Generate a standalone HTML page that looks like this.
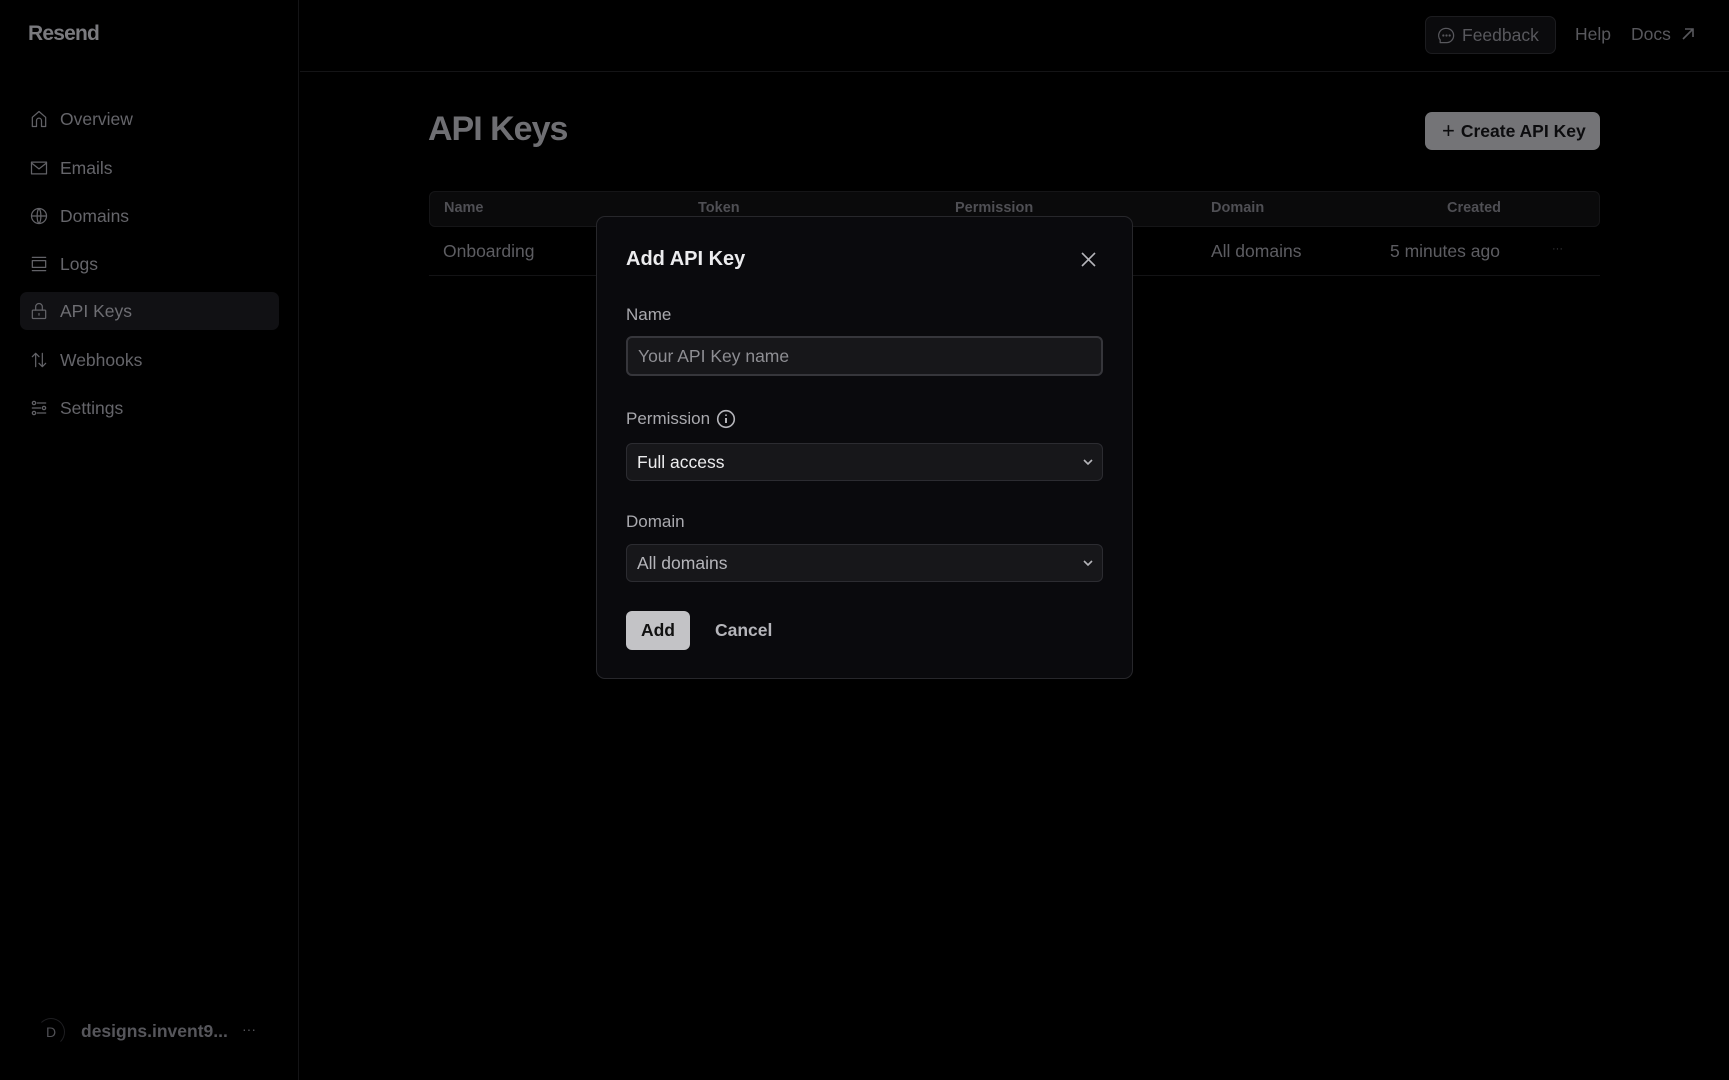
<!DOCTYPE html>
<html><head><meta charset="utf-8">
<style>
*{box-sizing:border-box;margin:0;padding:0}
body{width:1729px;height:1080px;background:#000;font-family:"Liberation Sans",sans-serif;position:relative;overflow:hidden;color:#6a6a6e}
.a{position:absolute;white-space:nowrap}
.side{position:absolute;left:0;top:0;width:299px;height:1080px;border-right:1px solid #141416}
.nav{position:absolute;left:20px;width:259px;height:38px;display:flex;align-items:center;padding-left:9px;font-size:17.5px;color:#65656a;border-radius:7px}
.nav svg{width:20px;height:20px;margin-right:11px;fill:none;stroke:#626267;stroke-width:1.5;stroke-linecap:round;stroke-linejoin:round}
.nav.act{background:#111114;color:#6e6e73}
.th{font-size:14.5px;color:#4f4f54;font-weight:bold}
.lbl{font-size:17px;color:#a9a9ae}
.field{position:absolute;left:626px;width:477px;border:1px solid #2c2c31;border-radius:6px;background:#17171a;display:flex;align-items:center;padding-left:10px;font-size:17.5px}
</style></head><body>
<div class="side">
  <div class="a" style="left:28px;top:22px;font-size:21px;font-weight:bold;color:#7a7a7e;letter-spacing:-0.8px">Resend</div>
  <div class="nav" style="top:100px"><svg viewBox="0 0 24 24"><path d="M4 21V10l8-7 8 7v11h-5v-7a3 3 0 0 0-6 0v7z"/></svg>Overview</div>
  <div class="nav" style="top:149px"><svg viewBox="0 0 24 24"><rect x="3" y="5" width="18" height="14"/><path d="M3 6l9 7 9-7"/></svg>Emails</div>
  <div class="nav" style="top:197px"><svg viewBox="0 0 24 24"><circle cx="12" cy="12" r="9"/><path d="M3 12h18M12 3c-3 3-3 15 0 18M12 3c3 3 3 15 0 18"/></svg>Domains</div>
  <div class="nav" style="top:245px"><svg viewBox="0 0 24 24"><path d="M4 4h16M4 20h16"/><rect x="4" y="8" width="16" height="8"/></svg>Logs</div>
  <div class="nav act" style="top:292px"><svg viewBox="0 0 24 24"><rect x="4" y="11" width="16" height="10" rx="1"/><path d="M8 11V7a4 4 0 0 1 8 0v4M12 15v2"/></svg>API Keys</div>
  <div class="nav" style="top:341px"><svg viewBox="0 0 24 24"><path d="M8 20V4M4 8l4-4 4 4M16 4v16M12 16l4 4 4-4"/></svg>Webhooks</div>
  <div class="nav" style="top:389px"><svg viewBox="0 0 24 24"><path d="M10 6h10M4 12h10M10 18h10"/><circle cx="6" cy="6" r="2"/><circle cx="18" cy="12" r="2"/><circle cx="6" cy="18" r="2"/></svg>Settings</div>
  <div class="a" style="left:37px;top:1018px;width:28px;height:28px;border-radius:50%;border:1px solid #1e1e21;border-left-color:transparent;border-bottom-color:transparent;font-size:14px;color:#505055;text-align:center;line-height:26px">D</div>
  <div class="a" style="left:81px;top:1021px;font-size:17.5px;font-weight:bold;color:#56565b">designs.invent9...</div>
  <div class="a" style="left:242px;top:1021px;font-size:14px;color:#56565b">···</div>
</div>
<div class="a" style="left:300px;top:71px;width:1429px;height:1px;background:#141416"></div>
<div class="a" style="left:1425px;top:16px;width:131px;height:38px;border:1px solid #1c1c1f;border-radius:7px;background:#0b0b0d;display:flex;align-items:center;padding-left:11px;font-size:17.5px;color:#58585d">
  <svg width="19" height="19" viewBox="0 0 24 24" fill="none" stroke="#58585d" stroke-width="1.6" style="margin-right:6px"><path d="M12 3a9 9 0 0 1 0 18H4v-3.5A9 9 0 0 1 12 3z" stroke-linejoin="round"/><circle cx="8" cy="12" r=".6" fill="#58585d"/><circle cx="12" cy="12" r=".6" fill="#58585d"/><circle cx="16" cy="12" r=".6" fill="#58585d"/></svg>Feedback</div>
<div class="a" style="left:1575px;top:24px;font-size:17.5px;color:#58585d">Help</div>
<div class="a" style="left:1631px;top:24px;font-size:17.5px;color:#58585d">Docs</div>
<svg class="a" style="left:1680px;top:26px" width="16" height="16" viewBox="0 0 16 16" fill="none" stroke="#58585d" stroke-width="1.6"><path d="M3 13L13 3M5 3h8v8"/></svg>

<div class="a" style="left:428px;top:110px;font-size:34px;font-weight:bold;color:#6f6f73;letter-spacing:-1px">API Keys</div>
<div class="a" style="left:1425px;top:112px;width:175px;height:38px;border-radius:7px;background:#747477;display:flex;align-items:center;padding-left:17px;font-size:17.5px;font-weight:bold;color:#0c0c0e">
  <span style="font-weight:normal;font-size:22px;margin-right:6px;line-height:1">+</span>Create API Key</div>

<div class="a" style="left:429px;top:191px;width:1171px;height:36px;border:1px solid #151517;border-radius:6px;background:#0a0a0b"></div>
<div class="a th" style="left:444px;top:200px">Name</div>
<div class="a th" style="left:698px;top:200px">Token</div>
<div class="a th" style="left:955px;top:200px">Permission</div>
<div class="a th" style="left:1211px;top:200px">Domain</div>
<div class="a th" style="left:1447px;top:200px">Created</div>
<div class="a" style="left:443px;top:241px;font-size:17.5px;color:#5d5d62">Onboarding</div>
<div class="a" style="left:1211px;top:241px;font-size:17.5px;color:#5d5d62">All domains</div>
<div class="a" style="left:1390px;top:241px;font-size:17.5px;color:#5d5d62">5 minutes ago</div>
<div class="a" style="left:1552px;top:243px;font-size:11px;color:#3c3c40">···</div>
<div class="a" style="left:429px;top:275px;width:1171px;height:1px;background:#131315"></div>

<div class="a" style="left:596px;top:216px;width:537px;height:463px;background:#0a0a0d;border:1px solid #27272b;border-radius:9px"></div>
<div class="a" style="left:626px;top:248px;font-size:20px;font-weight:bold;color:#ececee">Add API Key</div>
<svg class="a" style="left:1081px;top:252px" width="15" height="15" viewBox="0 0 15 15" stroke="#b5b5ba" stroke-width="1.6"><path d="M1 1l13 13M14 1L1 14"/></svg>
<div class="a lbl" style="left:626px;top:305px">Name</div>
<div class="field" style="top:336px;height:40px;border:2px solid #36363b;background:#17171a;color:#8e8e93">Your API Key name</div>
<div class="a lbl" style="left:626px;top:409px">Permission</div>
<svg class="a" style="left:716px;top:409px" width="20" height="20" viewBox="0 0 20 20" fill="none" stroke="#b5b5ba" stroke-width="1.6"><circle cx="10" cy="10" r="8.3"/><path d="M10 9v5" stroke-width="2"/><circle cx="10" cy="6.2" r=".9" fill="#b5b5ba" stroke="none"/></svg>
<div class="field" style="top:443px;height:38px;color:#ececee">Full access</div>
<div class="a lbl" style="left:626px;top:512px">Domain</div>
<div class="field" style="top:544px;height:38px;color:#b5b5ba">All domains</div>
<svg class="a" style="left:1082px;top:457px" width="12" height="10" viewBox="0 0 12 10" fill="none" stroke="#b5b5ba" stroke-width="1.6"><path d="M2 3l4 4 4-4"/></svg>
<svg class="a" style="left:1082px;top:558px" width="12" height="10" viewBox="0 0 12 10" fill="none" stroke="#b5b5ba" stroke-width="1.6"><path d="M2 3l4 4 4-4"/></svg>
<div class="a" style="left:626px;top:611px;width:64px;height:39px;background:#c3c3c6;border-radius:6px;text-align:center;line-height:39px;font-size:17.5px;font-weight:bold;color:#111">Add</div>
<div class="a" style="left:715px;top:620px;font-size:17.5px;font-weight:bold;color:#b5b5ba">Cancel</div>
</body></html>
